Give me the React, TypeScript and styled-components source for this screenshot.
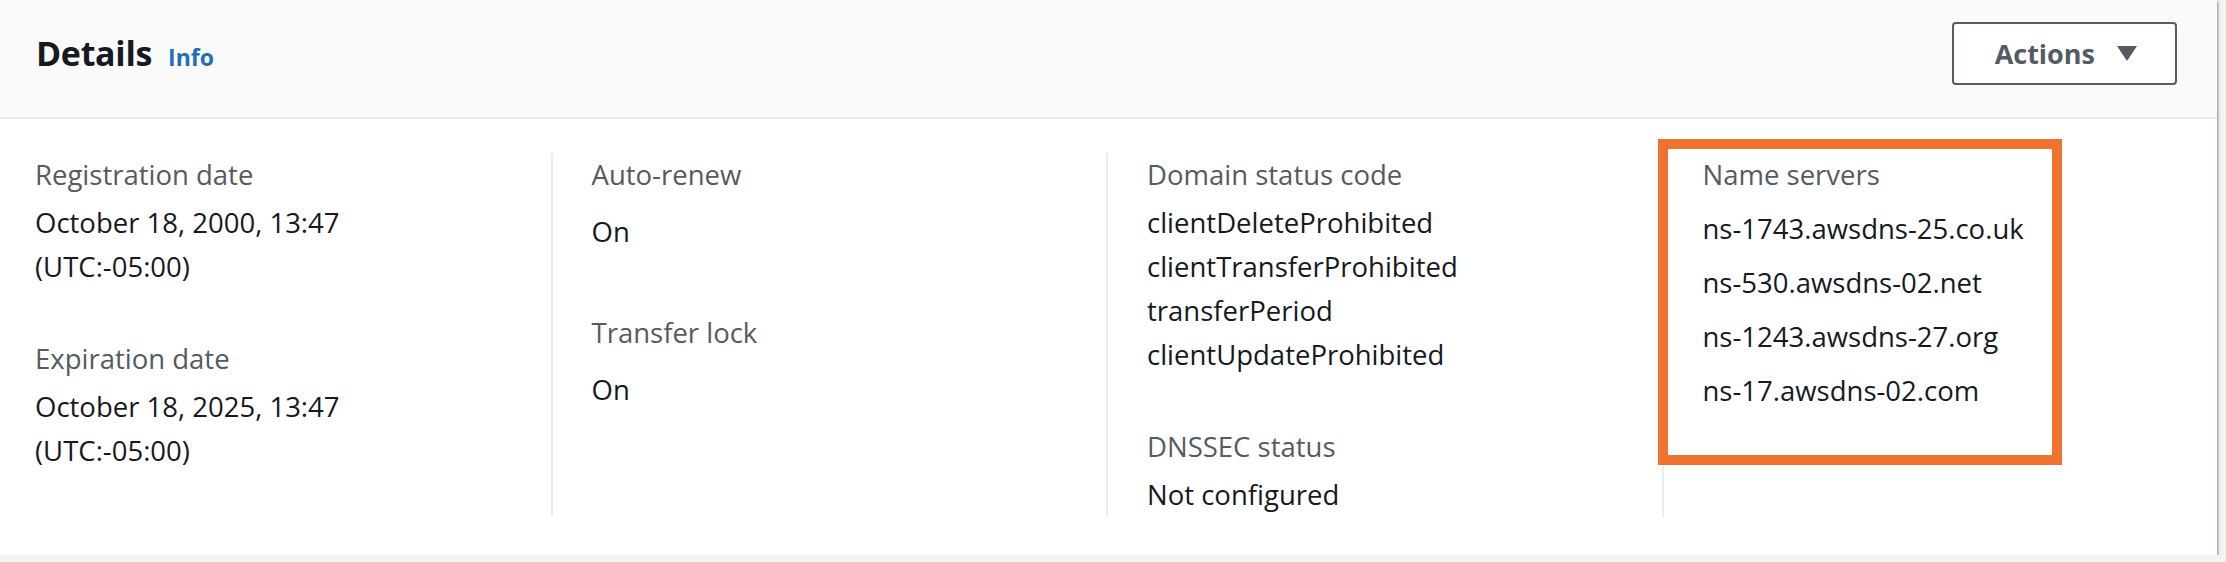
import React from "react";
import styled, { createGlobalStyle } from "styled-components";

const GlobalStyle = createGlobalStyle`
  html, body {
    margin: 0;
    padding: 0;
    background: #f2f3f3;
    font-family: "Open Sans", "Noto Sans", Arial, sans-serif;
  }
`;

const Card = styled.section`
  margin-left: -5px;
  width: 2222px;
  background: #ffffff;
  box-shadow: 0 2px 2px 0 rgba(0, 28, 36, 0.45), 2px 1px 2px 0 rgba(0, 28, 36, 0.2);
`;

const Header = styled.div`
  height: 119px;
  box-sizing: border-box;
  padding: 22px 40px 33px 41px;
  background: #fafafa;
  border-bottom: 2px solid #eaeded;
  display: flex;
  align-items: center;
  justify-content: space-between;
`;

const TitleRow = styled.div`
  display: flex;
  align-items: baseline;
  gap: 16px;
`;

const Title = styled.h2`
  margin: 0;
  font-size: 34px;
  font-weight: 700;
  color: #16191f;
  letter-spacing: -0.3px;
`;

const InfoLink = styled.a`
  font-size: 23px;
  font-weight: 700;
  color: #1f6fbb;
  text-decoration: none;
`;

const ActionsButton = styled.button`
  height: 63px;
  box-sizing: border-box;
  padding: 0 38px 0 41px;
  display: flex;
  align-items: center;
  gap: 22px;
  background: #ffffff;
  border: 2px solid #545b64;
  border-radius: 4px;
  font-family: inherit;
  font-size: 27px;
  font-weight: 700;
  color: #545b64;
`;

const Body = styled.div`
  display: grid;
  grid-template-columns: repeat(4, 1fr);
  padding: 34px 0 38px 0;
`;

const Column = styled.div<{ $divider?: boolean }>`
  position: relative;
  display: flex;
  flex-direction: column;
  gap: 48px;
  padding-left: ${(p) => (p.$divider ? "39px" : "40px")};
  border-left: ${(p) => (p.$divider ? "2px solid #eaeded" : "none")};
`;

const Field = styled.div`
  display: flex;
  flex-direction: column;
  gap: 4px;
`;

const Label = styled.div`
  font-size: 27.5px;
  line-height: 44px;
  color: #545b64;
`;

const Value = styled.div`
  font-size: 27.5px;
  line-height: 44px;
  color: #16191f;
`;

const StatusValue = styled(Value)`
  padding: 9px 0;
`;

const ServerList = styled.ul`
  list-style: none;
  margin: 0;
  padding: 6px 0 0 0;
  display: flex;
  flex-direction: column;
  gap: 10px;
`;

const Server = styled.li`
  font-size: 27.5px;
  line-height: 44px;
  color: #16191f;
`;

const Highlight = styled.div`
  position: absolute;
  left: -6px;
  top: -14px;
  width: 404px;
  height: 326px;
  box-sizing: border-box;
  border: 10px solid #ee7330;
  pointer-events: none;
`;

function Caret() {
  return (
    <svg width="20" height="15" viewBox="0 0 20 15">
      <path d="M0 0 H20 L10 15 Z" fill="#545b64" />
    </svg>
  );
}

export default function App() {
  return (
    <>
      <GlobalStyle />
      <Card>
        <Header>
          <TitleRow>
            <Title>Details</Title>
            <InfoLink href="#">Info</InfoLink>
          </TitleRow>
          <ActionsButton type="button">
            Actions
            <Caret />
          </ActionsButton>
        </Header>
        <Body>
          <Column>
            <Field>
              <Label>Registration date</Label>
              <Value>
                October 18, 2000, 13:47
                <br />
                (UTC:-05:00)
              </Value>
            </Field>
            <Field>
              <Label>Expiration date</Label>
              <Value>
                October 18, 2025, 13:47
                <br />
                (UTC:-05:00)
              </Value>
            </Field>
          </Column>
          <Column $divider>
            <Field>
              <Label>Auto-renew</Label>
              <StatusValue>On</StatusValue>
            </Field>
            <Field>
              <Label>Transfer lock</Label>
              <StatusValue>On</StatusValue>
            </Field>
          </Column>
          <Column $divider>
            <Field>
              <Label>Domain status code</Label>
              <Value>
                clientDeleteProhibited
                <br />
                clientTransferProhibited
                <br />
                transferPeriod
                <br />
                clientUpdateProhibited
              </Value>
            </Field>
            <Field>
              <Label>DNSSEC status</Label>
              <Value>Not configured</Value>
            </Field>
          </Column>
          <Column $divider>
            <Field>
              <Label>Name servers</Label>
              <ServerList>
                <Server>ns-1743.awsdns-25.co.uk</Server>
                <Server>ns-530.awsdns-02.net</Server>
                <Server>ns-1243.awsdns-27.org</Server>
                <Server>ns-17.awsdns-02.com</Server>
              </ServerList>
            </Field>
            <Highlight />
          </Column>
        </Body>
      </Card>
    </>
  );
}
